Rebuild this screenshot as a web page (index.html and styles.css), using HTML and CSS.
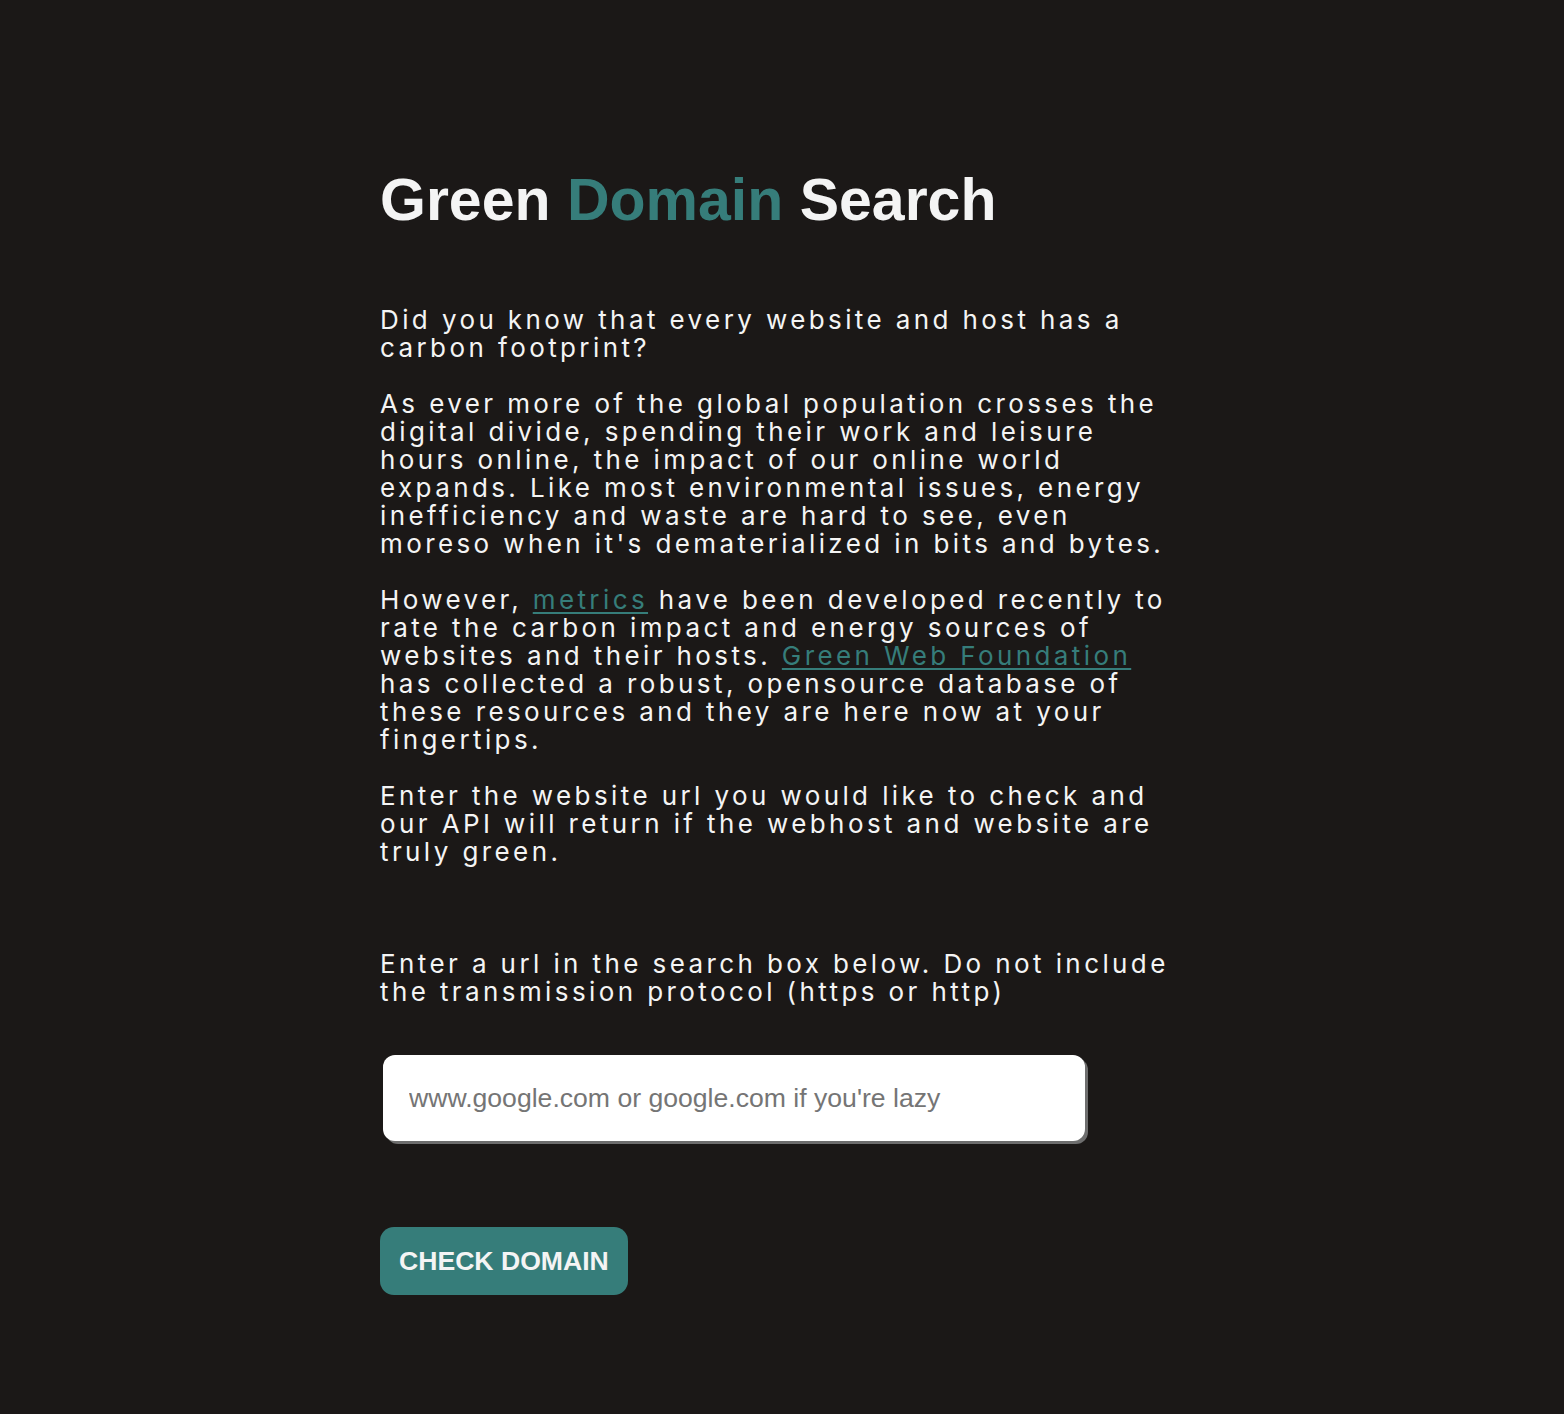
FILE: index.html
```html
<!DOCTYPE html>
<html lang="en">
<head>
<meta charset="utf-8">
<title>Green Domain Search</title>
<link rel="stylesheet" href="styles.css">
</head>
<body>
<main class="page">
  <h1 class="title">Green <span class="accent">Domain</span> Search</h1>
  <section class="intro">
    <p>Did you know that every website and host has a carbon footprint?</p>
    <p>As ever more of the global population crosses the digital divide, spending their work and leisure hours online, the impact of our online world expands. Like most environmental issues, energy inefficiency and waste are hard to see, even moreso when it's dematerialized in bits and bytes.</p>
    <p>However, <a href="#">metrics</a> have been developed recently to rate the carbon impact and energy sources of websites and their hosts. <a href="#">Green Web Foundation</a> has collected a robust, opensource database of these resources and they are here now at your fingertips.</p>
    <p>Enter the website url you would like to check and our API will return if the webhost and website are truly green.</p>
  </section>
  <form class="search">
    <label class="hint" for="url">Enter a url in the search box below. Do not include the transmission protocol (https or http)</label>
    <input id="url" class="url-input" type="text" placeholder="www.google.com or google.com if you're lazy">
    <button class="check" type="button">CHECK DOMAIN</button>
  </form>
</main>
</body>
</html>
```
FILE: styles.css
```css
html, body {
  margin: 0;
  padding: 0;
  background: #1b1817;
}
body {
  color: #f4f4f4;
  font-family: Inter, "Liberation Sans", sans-serif;
}
.page {
  width: 800px;
  margin-left: 380px;
  padding-top: 168px;
}
.title {
  margin: 0;
  font-family: "Liberation Sans", Arial, sans-serif;
  font-weight: 700;
  font-size: 59px;
  line-height: 64px;
  color: #f4f4f4;
}
.accent {
  color: #367d7a;
}
.intro {
  margin-top: 74px;
}
.intro p, .hint {
  margin: 0 0 28px 0;
  font-size: 26px;
  line-height: 28px;
  letter-spacing: 3.4px;
  font-weight: 400;
}
.intro a {
  color: #367d7a;
  text-decoration: underline;
  text-underline-offset: 3px;
  text-decoration-thickness: 2px;
}
.search {
  display: flex;
  flex-direction: column;
  align-items: flex-start;
  margin-top: 84px;
}
.hint {
  display: block;
  margin-bottom: 49px;
}
.url-input {
  box-sizing: border-box;
  width: 702px;
  height: 86px;
  margin-left: 3px;
  border: none;
  border-radius: 12px;
  background: #fff;
  box-shadow: 3px 3px 0 #6e6e6e;
  padding: 0 26px;
  font-family: "Liberation Sans", Arial, sans-serif;
  font-size: 26.6px;
  color: #222;
  outline: none;
}
.url-input::placeholder {
  color: #757575;
}
.check {
  margin-top: 86px;
  height: 68px;
  padding: 0 19px;
  border: none;
  border-radius: 14px;
  background: #367d7a;
  color: #f4f4f4;
  font-family: "Liberation Sans", Arial, sans-serif;
  font-weight: 700;
  font-size: 26.6px;
  cursor: pointer;
}
```
